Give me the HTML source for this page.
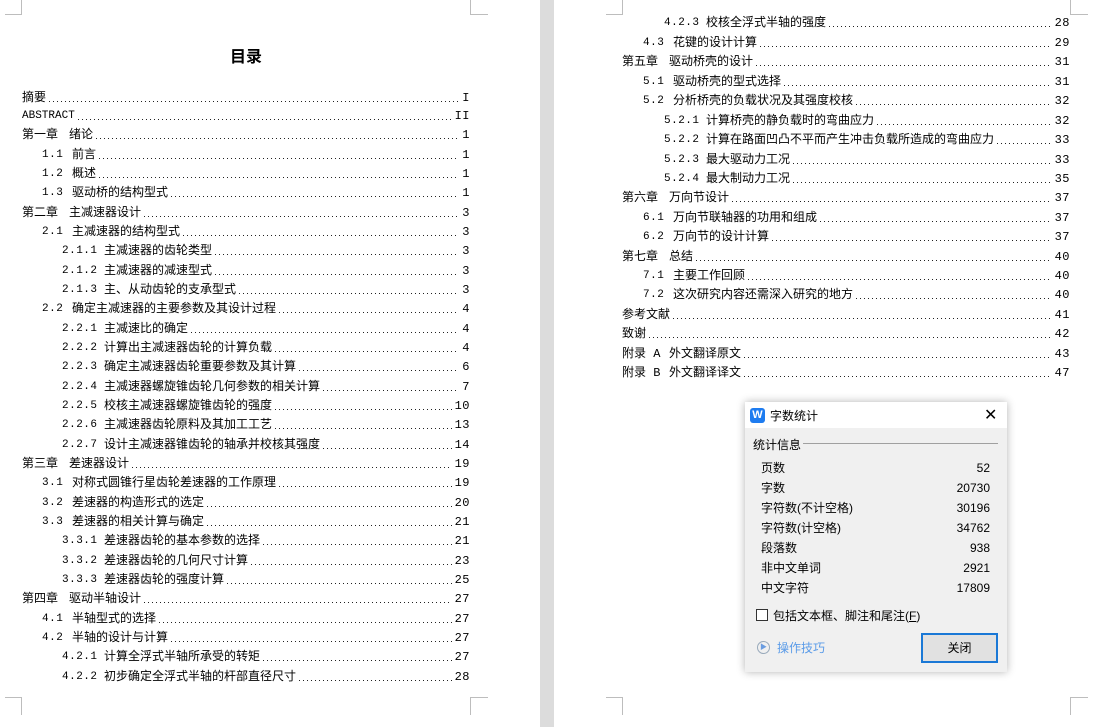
<!DOCTYPE html>
<html><head><meta charset="utf-8"><style>
*{margin:0;padding:0;box-sizing:border-box}
body{width:1096px;height:727px;overflow:hidden;background:#fff;position:relative;font-family:"Liberation Mono","Noto Sans CJK SC",monospace;font-size:12px;color:#000}
.gap{position:absolute;left:540px;top:0;width:14px;height:727px;background:#dcdcdc}
.m{position:absolute;border-color:#bdbdbd;border-style:solid;border-width:0}
.r{position:absolute;display:flex;height:14px;line-height:14px;white-space:nowrap;align-items:flex-end}
.r i{flex:1;height:1px;margin:0 3px 3px 3px;background:linear-gradient(to right,#222 1px,transparent 1px);background-size:4px 1px}
.r b{font-weight:normal;letter-spacing:0.5px}
.n2{display:inline-block;width:30px;font-size:11px;letter-spacing:0.5px}
.n3{display:inline-block;width:42px;font-size:11px;letter-spacing:0.5px}
.n1{display:inline-block;width:47px}
.dlg{position:absolute;left:745px;top:402px;width:262px;height:270px;background:#f0f0f0;box-shadow:0 0 8px rgba(0,0,0,.3);font-family:"Liberation Sans","Noto Sans CJK SC",sans-serif;font-size:12px}
.dlg .tb{height:26px;background:#fff;position:relative}
.dlg .a{position:absolute}
</style></head><body>
<div class="gap"></div>
<div class="m" style="left:5px;top:0;width:17px;height:15px;border-right-width:1px;border-bottom-width:1px"></div>
<div class="m" style="left:470px;top:0;width:18px;height:15px;border-left-width:1px;border-bottom-width:1px"></div>
<div class="m" style="left:5px;top:697px;width:17px;height:18px;border-right-width:1px;border-top-width:1px"></div>
<div class="m" style="left:470px;top:697px;width:18px;height:18px;border-left-width:1px;border-top-width:1px"></div>
<div class="m" style="left:606px;top:0;width:17px;height:15px;border-right-width:1px;border-bottom-width:1px"></div>
<div class="m" style="left:1070px;top:0;width:18px;height:15px;border-left-width:1px;border-bottom-width:1px"></div>
<div class="m" style="left:606px;top:697px;width:17px;height:18px;border-right-width:1px;border-top-width:1px"></div>
<div class="m" style="left:1070px;top:697px;width:18px;height:18px;border-left-width:1px;border-top-width:1px"></div>

<div style="position:absolute;left:0;width:492px;top:43px;text-align:center;font-size:16px;font-weight:bold;font-family:'Noto Sans CJK SC',sans-serif">目录</div>

<div class="r" style="top:91px;left:22px;width:448px"><span>摘要</span><i></i><b>I</b></div>
<div class="r" style="top:109px;left:22px;width:448px"><span style="font-size:11px">ABSTRACT</span><i></i><b>II</b></div>
<div class="r" style="top:128px;left:22px;width:448px"><span class="n1">第一章</span><span>绪论</span><i></i><b>1</b></div>
<div class="r" style="top:148px;left:42px;width:428px"><span class="n2">1.1</span><span>前言</span><i></i><b>1</b></div>
<div class="r" style="top:167px;left:42px;width:428px"><span class="n2">1.2</span><span>概述</span><i></i><b>1</b></div>
<div class="r" style="top:186px;left:42px;width:428px"><span class="n2">1.3</span><span>驱动桥的结构型式</span><i></i><b>1</b></div>
<div class="r" style="top:206px;left:22px;width:448px"><span class="n1">第二章</span><span>主减速器设计</span><i></i><b>3</b></div>
<div class="r" style="top:225px;left:42px;width:428px"><span class="n2">2.1</span><span>主减速器的结构型式</span><i></i><b>3</b></div>
<div class="r" style="top:244px;left:62px;width:408px"><span class="n3">2.1.1</span><span>主减速器的齿轮类型</span><i></i><b>3</b></div>
<div class="r" style="top:264px;left:62px;width:408px"><span class="n3">2.1.2</span><span>主减速器的减速型式</span><i></i><b>3</b></div>
<div class="r" style="top:283px;left:62px;width:408px"><span class="n3">2.1.3</span><span>主、从动齿轮的支承型式</span><i></i><b>3</b></div>
<div class="r" style="top:302px;left:42px;width:428px"><span class="n2">2.2</span><span>确定主减速器的主要参数及其设计过程</span><i></i><b>4</b></div>
<div class="r" style="top:322px;left:62px;width:408px"><span class="n3">2.2.1</span><span>主减速比的确定</span><i></i><b>4</b></div>
<div class="r" style="top:341px;left:62px;width:408px"><span class="n3">2.2.2</span><span>计算出主减速器齿轮的计算负载</span><i></i><b>4</b></div>
<div class="r" style="top:360px;left:62px;width:408px"><span class="n3">2.2.3</span><span>确定主减速器齿轮重要参数及其计算</span><i></i><b>6</b></div>
<div class="r" style="top:380px;left:62px;width:408px"><span class="n3">2.2.4</span><span>主减速器螺旋锥齿轮几何参数的相关计算</span><i></i><b>7</b></div>
<div class="r" style="top:399px;left:62px;width:408px"><span class="n3">2.2.5</span><span>校核主减速器螺旋锥齿轮的强度</span><i></i><b>10</b></div>
<div class="r" style="top:418px;left:62px;width:408px"><span class="n3">2.2.6</span><span>主减速器齿轮原料及其加工工艺</span><i></i><b>13</b></div>
<div class="r" style="top:438px;left:62px;width:408px"><span class="n3">2.2.7</span><span>设计主减速器锥齿轮的轴承并校核其强度</span><i></i><b>14</b></div>
<div class="r" style="top:457px;left:22px;width:448px"><span class="n1">第三章</span><span>差速器设计</span><i></i><b>19</b></div>
<div class="r" style="top:476px;left:42px;width:428px"><span class="n2">3.1</span><span>对称式圆锥行星齿轮差速器的工作原理</span><i></i><b>19</b></div>
<div class="r" style="top:496px;left:42px;width:428px"><span class="n2">3.2</span><span>差速器的构造形式的选定</span><i></i><b>20</b></div>
<div class="r" style="top:515px;left:42px;width:428px"><span class="n2">3.3</span><span>差速器的相关计算与确定</span><i></i><b>21</b></div>
<div class="r" style="top:534px;left:62px;width:408px"><span class="n3">3.3.1</span><span>差速器齿轮的基本参数的选择</span><i></i><b>21</b></div>
<div class="r" style="top:554px;left:62px;width:408px"><span class="n3">3.3.2</span><span>差速器齿轮的几何尺寸计算</span><i></i><b>23</b></div>
<div class="r" style="top:573px;left:62px;width:408px"><span class="n3">3.3.3</span><span>差速器齿轮的强度计算</span><i></i><b>25</b></div>
<div class="r" style="top:592px;left:22px;width:448px"><span class="n1">第四章</span><span>驱动半轴设计</span><i></i><b>27</b></div>
<div class="r" style="top:612px;left:42px;width:428px"><span class="n2">4.1</span><span>半轴型式的选择</span><i></i><b>27</b></div>
<div class="r" style="top:631px;left:42px;width:428px"><span class="n2">4.2</span><span>半轴的设计与计算</span><i></i><b>27</b></div>
<div class="r" style="top:650px;left:62px;width:408px"><span class="n3">4.2.1</span><span>计算全浮式半轴所承受的转矩</span><i></i><b>27</b></div>
<div class="r" style="top:670px;left:62px;width:408px"><span class="n3">4.2.2</span><span>初步确定全浮式半轴的杆部直径尺寸</span><i></i><b>28</b></div>

<div class="r" style="top:16px;left:664px;width:406px"><span class="n3">4.2.3</span><span>校核全浮式半轴的强度</span><i></i><b>28</b></div>
<div class="r" style="top:36px;left:643px;width:427px"><span class="n2">4.3</span><span>花键的设计计算</span><i></i><b>29</b></div>
<div class="r" style="top:55px;left:622px;width:448px"><span class="n1">第五章</span><span>驱动桥壳的设计</span><i></i><b>31</b></div>
<div class="r" style="top:75px;left:643px;width:427px"><span class="n2">5.1</span><span>驱动桥壳的型式选择</span><i></i><b>31</b></div>
<div class="r" style="top:94px;left:643px;width:427px"><span class="n2">5.2</span><span>分析桥壳的负载状况及其强度校核</span><i></i><b>32</b></div>
<div class="r" style="top:114px;left:664px;width:406px"><span class="n3">5.2.1</span><span>计算桥壳的静负载时的弯曲应力</span><i></i><b>32</b></div>
<div class="r" style="top:133px;left:664px;width:406px"><span class="n3">5.2.2</span><span>计算在路面凹凸不平而产生冲击负载所造成的弯曲应力</span><i></i><b>33</b></div>
<div class="r" style="top:153px;left:664px;width:406px"><span class="n3">5.2.3</span><span>最大驱动力工况</span><i></i><b>33</b></div>
<div class="r" style="top:172px;left:664px;width:406px"><span class="n3">5.2.4</span><span>最大制动力工况</span><i></i><b>35</b></div>
<div class="r" style="top:191px;left:622px;width:448px"><span class="n1">第六章</span><span>万向节设计</span><i></i><b>37</b></div>
<div class="r" style="top:211px;left:643px;width:427px"><span class="n2">6.1</span><span>万向节联轴器的功用和组成</span><i></i><b>37</b></div>
<div class="r" style="top:230px;left:643px;width:427px"><span class="n2">6.2</span><span>万向节的设计计算</span><i></i><b>37</b></div>
<div class="r" style="top:250px;left:622px;width:448px"><span class="n1">第七章</span><span>总结</span><i></i><b>40</b></div>
<div class="r" style="top:269px;left:643px;width:427px"><span class="n2">7.1</span><span>主要工作回顾</span><i></i><b>40</b></div>
<div class="r" style="top:288px;left:643px;width:427px"><span class="n2">7.2</span><span>这次研究内容还需深入研究的地方</span><i></i><b>40</b></div>
<div class="r" style="top:308px;left:622px;width:448px"><span>参考文献</span><i></i><b>41</b></div>
<div class="r" style="top:327px;left:622px;width:448px"><span>致谢</span><i></i><b>42</b></div>
<div class="r" style="top:347px;left:622px;width:448px"><span class="n1">附录 A</span><span>外文翻译原文</span><i></i><b>43</b></div>
<div class="r" style="top:366px;left:622px;width:448px"><span class="n1">附录 B</span><span>外文翻译译文</span><i></i><b>47</b></div>

<div class="dlg">
 <div class="tb">
  <div class="a" style="left:5px;top:6px;width:15px;height:15px;background:#1e7cf0;border-radius:3px;color:#fff;font-weight:bold;font-size:11px;line-height:15px;text-align:center">W</div>
  <div class="a" style="left:25px;top:5px">字数统计</div>
  <div class="a" style="left:239px;top:3px;font-size:16px">✕</div>
 </div>
 <div class="a" style="left:8px;top:34px">统计信息</div>
 <div class="a" style="left:58px;top:41px;width:195px;height:1px;background:#a0a0a0"></div>
 <div class="a" style="left:16px;top:56px;line-height:20px">页数<br>字数<br>字符数(不计空格)<br>字符数(计空格)<br>段落数<br>非中文单词<br>中文字符</div>
 <div class="a" style="right:17px;top:56px;line-height:20px;text-align:right">52<br>20730<br>30196<br>34762<br>938<br>2921<br>17809</div>
 <div class="a" style="left:11px;top:207px;width:12px;height:12px;border:1px solid #333;background:#fff"></div>
 <div class="a" style="left:28px;top:205px">包括文本框、脚注和尾注(<u>F</u>)</div>
 <div class="a" style="left:12px;top:239px;width:13px;height:13px;border:1px solid #9ab;border-radius:50%;font-size:7px;line-height:11px;text-align:center;color:#6a9ce0">▶</div>
 <div class="a" style="left:32px;top:237px;color:#5a9be8">操作技巧</div>
 <div class="a" style="left:176px;top:231px;width:77px;height:30px;border:2px solid #1a78d6;background:#e1e1e1;text-align:center;line-height:26px">关闭</div>
</div>
</body></html>
